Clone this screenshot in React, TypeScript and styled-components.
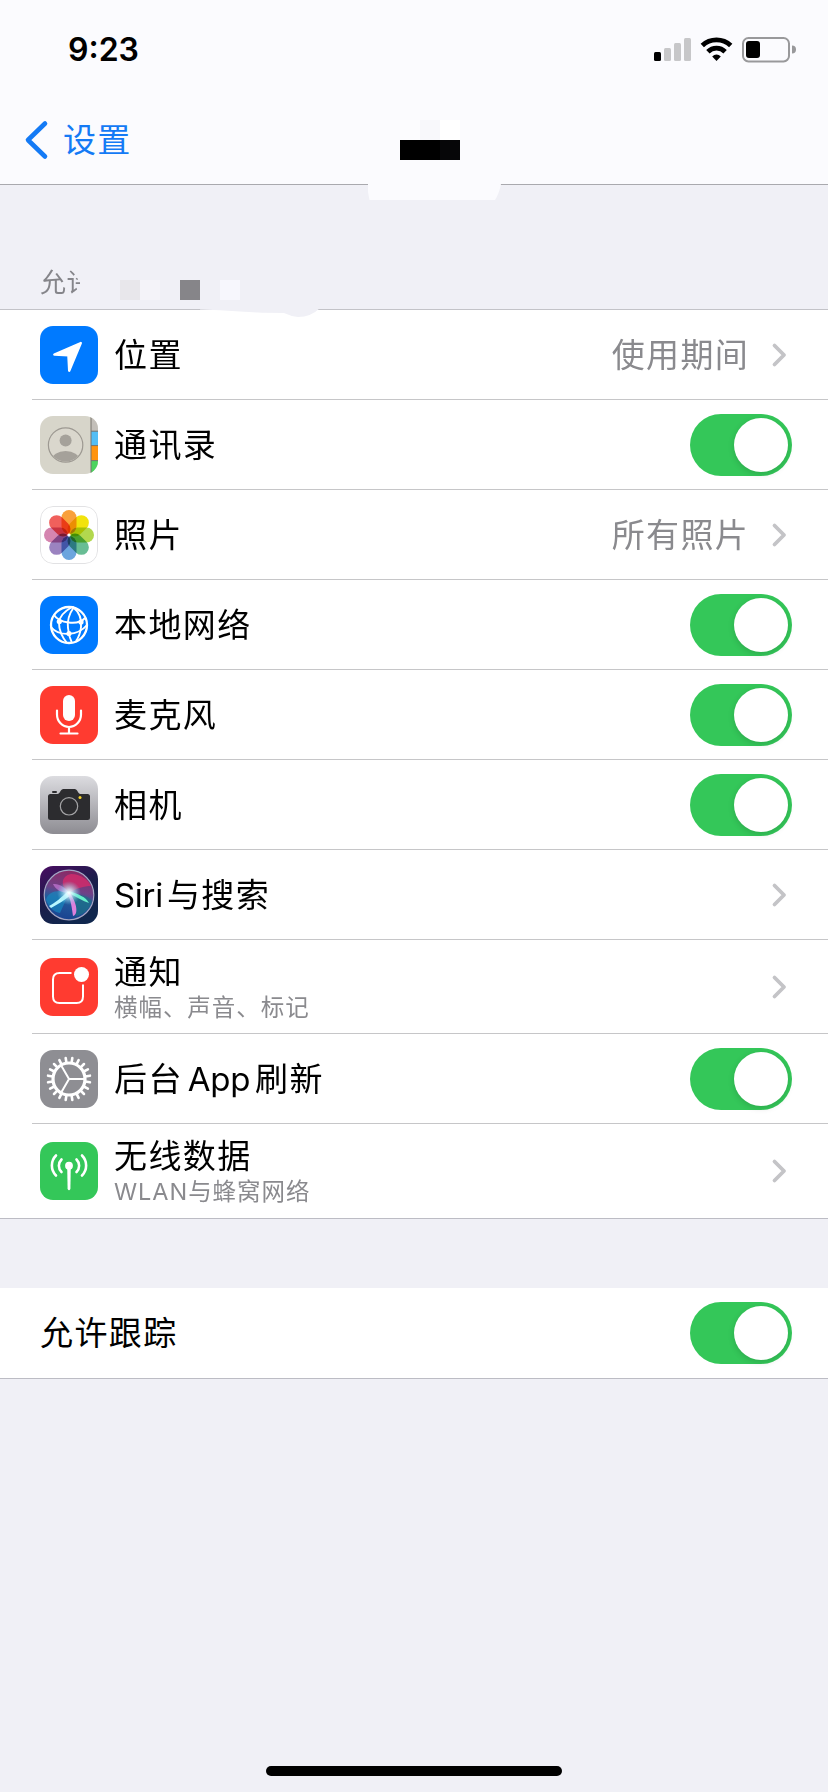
import React from "react"

import styled, { createGlobalStyle } from 'styled-components'

const GlobalStyle = createGlobalStyle`
    body {
        margin: 0;
        background: #f0f0f6;
        font-family: Inter, "Noto Sans CJK SC", sans-serif;
    }
`;

const Screen = styled.div`
    display: flex;
    flex-direction: column;
    width: 828px;
    height: 1792px;
    background: #f0f0f6;
    overflow: hidden;
`;

const Header = styled.header`
    position: relative;
    box-sizing: border-box;
    height: 185px;
    background: #fbfbfe;
    border-bottom: 1px solid #a9a9ae;
`;

const StatusBar = styled.div`
    display: flex;
    justify-content: space-between;
    align-items: center;
    height: 99px;
    padding: 0 32px 0 68px;
`;

const Time = styled.div`
    font-size: 32px;
    font-weight: 600;
    line-height: 40px;
    color: #000;
`;

const NavBar = styled.nav`
    display: flex;
    align-items: center;
    height: 82px;
    padding-left: 24px;
`;

const BackLabel = styled.span`
    margin-left: 14px;
    font-size: 33px;
    line-height: 40px;
    letter-spacing: 1.3px;
    color: #147aF5;
`;

const TitleMask = styled.svg`
    position: absolute;
    left: 368px;
    top: 118px;
`;

const SectionTitle = styled.div`
    position: relative;
    height: 124px;
`;

const SectionText = styled.span`
    display: block;
    padding: 79px 0 0 40px;
    font-size: 26px;
    line-height: 38px;
    letter-spacing: 0.6px;
    color: #85858a;
    clip-path: polygon(0 0, 75px 0, 75px 92px, 80px 95px, 80px 107px, 85px 112px, 85px 117px, 0 117px);
`;

const SectionMask = styled.svg`
    position: absolute;
    left: 80px;
    top: 95px;
`;

const Group = styled.section<{ $topLine?: boolean; $gap?: number }>`
    background: #fff;
    margin-top: ${p => p.$gap || 0}px;
    border-top: ${p => p.$topLine ? '1px solid #c3c3c8' : 'none'};
    border-bottom: 1px solid #bcbcc4;
`;

const Row = styled.div<{ $height: number; $last?: boolean }>`
    display: flex;
    align-items: center;
    box-sizing: border-box;
    height: ${p => p.$height}px;
    margin-left: 32px;
    padding: 0 36px 0 8px;
    border-bottom: 1px solid ${p => p.$last ? 'transparent' : '#c6c6c8'};
`;

const IconBox = styled.div`
    width: 58px;
    height: 58px;
    margin: 1px 16px 0 0;
    border-radius: 13px;
    overflow: hidden;
    svg {
        display: block;
    }
`;

const Texts = styled.div`
    flex: 1;
`;

const Label = styled.div`
    font-size: 33px;
    line-height: 40px;
    letter-spacing: 1.4px;
    color: #000;
`;

const Latin = styled.span<{ $left?: number; $right?: number }>`
    letter-spacing: -0.3px;
    margin-left: ${p => p.$left || 0}px;
    margin-right: ${p => p.$right || 0}px;
`;

const Detail = styled.div`
    margin-bottom: -1px;
    padding-top: 1px;
    font-size: 23.5px;
    line-height: 30px;
    letter-spacing: 0.95px;
    color: #8a8a8e;
`;

const Value = styled.div`
    margin-right: 22px;
    font-size: 33px;
    line-height: 40px;
    letter-spacing: 1.3px;
    color: #8a8a8e;
`;

const ChevronBox = styled.div`
    display: flex;
    width: 16px;
    margin-right: 5px;
`;

const Switch = styled.div`
    display: flex;
    justify-content: flex-end;
    box-sizing: border-box;
    width: 102px;
    height: 62px;
    margin-top: 1px;
    padding: 4px;
    border-radius: 31px;
    background: #34c759;
`;

const Knob = styled.div`
    width: 54px;
    height: 54px;
    border-radius: 50%;
    background: #fff;
    box-shadow: 0 2px 6px rgba(0, 0, 0, 0.15);
`;

const HomeBar = styled.div`
    width: 296px;
    height: 10px;
    margin: auto auto 16px 266px;
    border-radius: 5px;
    background: #000;
`;

const StatusIcons = () => (
    <svg width="143" height="28" viewBox="652 36 143 28">
        <rect x="653" y="52" width="7" height="9" rx="1.5" />
        <g fill="#c7c7c9">
            <rect x="663" y="48" width="7" height="13" rx="1.5" />
            <rect x="673" y="43" width="7" height="18" rx="1.5" />
            <rect x="683" y="38" width="7" height="23" rx="1.5" />
        </g>
        <g fill="none" stroke="#000" strokeWidth="4.8">
            <path d="M701.3 45.6a20.5 20.5 0 0 1 28.4 0" />
            <path d="M706.9 51.7a12.2 12.2 0 0 1 17.2 0" />
        </g>
        <path d="M715.5 61l-4.3-4.6a6 6 0 0 1 8.6 0z" />
        <rect x="742" y="38" width="46" height="23.4" rx="5.5" fill="none" stroke="#99999b" strokeWidth="2" />
        <rect x="745" y="41" width="14" height="17" rx="3" />
        <path d="M791 45.5a4 4 0 0 1 0 8z" fill="#99999b" />
    </svg>
)

const Chevron = () => (
    <ChevronBox>
        <svg width="16" height="26" viewBox="0 0 16 26">
            <path d="M3.5 3.5L13 13L3.5 22.5" fill="none" stroke="#c4c4c7" strokeWidth="3.8" strokeLinecap="round" strokeLinejoin="round" />
        </svg>
    </ChevronBox>
)

const Toggle = () => <Switch><Knob /></Switch>

const Tile = ({ fill, children }: { fill: string, children: React.ReactNode }) => (
    <IconBox>
        <svg width="58" height="58" viewBox="0 0 58 58">
            <rect width="58" height="58" fill={fill} />
            {children}
        </svg>
    </IconBox>
)

const LocationIcon = () => (
    <Tile fill="#007aff">
        <path d="M40.8 17L14.3 28.6L28.4 29.2L29.2 44.8Z" fill="#fff" stroke="#fff" strokeWidth="2.4" strokeLinejoin="round" />
    </Tile>
)

const ContactsIcon = () => (
    <Tile fill="#d7d5ca">
        <clipPath id="avatar"><circle cx="25.6" cy="29" r="16.5" /></clipPath>
        <circle cx="25.6" cy="29" r="17.2" fill="#dad7cd" stroke="#9d9992" strokeWidth="1.2" />
        <g clipPath="url(#avatar)" fill="#a5a19a">
            <circle cx="25.6" cy="24.4" r="6" />
            <ellipse cx="25.6" cy="44" rx="14" ry="9" />
        </g>
        <rect x="51" width="7" height="15" fill="#c3bfb9" />
        <rect x="51" y="15" width="7" height="15" fill="#54bef5" />
        <rect x="51" y="29.5" width="7" height="15" fill="#ff9410" />
        <rect x="51" y="44.5" width="7" height="14" fill="#4bd45f" />
        <path d="M51 0V58M51 15.2H58M51 29.6H58M51 44.6H58" stroke="#77736c" strokeWidth="1" />
    </Tile>
)

const petals = ['#f9a03c', '#f2e30c', '#b2d84e', '#68bd94', '#6ca5de', '#9b83c0', '#d585b0', '#f0605c'];

const Petals = styled.g`
    isolation: isolate;
    rect {
        mix-blend-mode: multiply;
    }
`;

const PhotosIcon = () => (
    <Tile fill="#fff">
        <Petals>
            {petals.map((color, i) => (
                <rect
                    key={color}
                    x="21.5" y="4" width="15" height="24" rx="7.5"
                    fill={color}
                    transform={`rotate(${i * 45} 29 29)`}
                />
            ))}
        </Petals>
        <circle cx="29" cy="29" r="1.6" fill="#fff" />
        <rect x="0.5" y="0.5" width="57" height="57" rx="12.5" fill="none" stroke="#e2e2e4" />
    </Tile>
)

const NetworkIcon = () => (
    <Tile fill="#007aff">
        <g fill="none" stroke="#fff" strokeWidth="1.9">
            <circle cx="29" cy="29" r="18" strokeWidth="2.3" />
            <path d="M32 11C25 15 19 21 19 27C19 34 22 41 27 47" />
            <path d="M34 11C29 18 27 25 28 32C28.5 38 30 43 32 47" />
            <path d="M33 11C39 16 42 23 41 31C40.5 36 39 41 36 45" />
            <path d="M14 19C19 27 38 30 45 22" />
            <path d="M11 31C19 41 38 40 47 29" />
        </g>
        <g fill="#fff">
            <circle cx="19.3" cy="25.5" r="2.6" />
            <circle cx="41" cy="26" r="2.6" />
            <circle cx="29" cy="37.5" r="2.6" />
        </g>
    </Tile>
)

const MicIcon = () => (
    <Tile fill="#ff3b30">
        <rect x="23" y="9" width="12" height="26" rx="6" fill="#fff" />
        <path d="M17 24.5V28.5a12 12.5 0 0 0 24 0V24.5M29 41V47.5M20.5 47.5H37.5" fill="none" stroke="#fff" strokeWidth="2.2" strokeLinecap="round" />
    </Tile>
)

const CameraIcon = () => (
    <Tile fill="url(#steel)">
        <linearGradient id="steel" x1="0" y1="0" x2="0" y2="1">
            <stop offset="0" stopColor="#dcdce0" />
            <stop offset="1" stopColor="#8d8c92" />
        </linearGradient>
        <path d="M10.5 18H17.5C20 18 20.5 13 23.5 13H34.5C37.5 13 38 18 40.5 18H47.5Q50 18 50 20.5V41.5Q50 44 47.5 44H10.5Q8 44 8 41.5V20.5Q8 18 10.5 18Z" fill="#2c2c2f" />
        <rect x="12" y="15" width="5" height="2" rx="1" fill="#2c2c2f" />
        <circle cx="29" cy="30.3" r="8.7" fill="none" stroke="#a3a3a5" strokeWidth="1.2" />
        <circle cx="40" cy="21.5" r="1.5" fill="#f5d32a" />
    </Tile>
)

const SiriIcon = () => (
    <Tile fill="url(#night)">
        <linearGradient id="night" x1="0" y1="0" x2="0.5" y2="1">
            <stop offset="0" stopColor="#4a0d62" />
            <stop offset="0.55" stopColor="#1b1d4a" />
            <stop offset="1" stopColor="#10274e" />
        </linearGradient>
        <linearGradient id="orb" x1="0.6" y1="0" x2="0.4" y2="1">
            <stop offset="0" stopColor="#8c2863" />
            <stop offset="0.4" stopColor="#6f4187" />
            <stop offset="0.6" stopColor="#245c9c" />
            <stop offset="1" stopColor="#1a4290" />
        </linearGradient>
        <radialGradient id="glow">
            <stop offset="0" stopColor="#fff" />
            <stop offset="0.3" stopColor="#d6f7ff" stopOpacity="0.8" />
            <stop offset="1" stopColor="#6fd6ee" stopOpacity="0" />
        </radialGradient>
        <circle cx="29" cy="29" r="24.5" fill="url(#orb)" />
        <path d="M29 27C19 23 8 25 6 34C9 42 14 46 20 47Z" fill="#168fc4" opacity="0.6" />
        <path d="M29 27C37 28 48 29 52 35C49 44 43 49 36 50Z" fill="#1c6f86" opacity="0.7" />
        <path d="M29 27C20 20 21 10 31 8C42 8 49 15 51 20C44 20 37 22 29 27Z" fill="#d42c6c" opacity="0.8" />
        <path d="M29 27C24 19 17 18 13 18C15 23 21 27 29 27Z" fill="#c479d5" opacity="0.7" />
        <path d="M28 25C22 31 15 37 9 40L11 42C18 38 25 34 31 29Z" fill="#b8f8ff" />
        <path d="M29 27C36 31 43 35 49 37C46 31 38 28 29 25Z" fill="#65efca" />
        <path d="M27 27C31 33 32 43 33 50C38 49 38 39 30 27Z" fill="#dc80dc" />
        <circle cx="29" cy="27" r="12" fill="url(#glow)" />
        <circle cx="29" cy="29" r="24.8" fill="none" stroke="#a5a6c4" strokeWidth="1.2" />
    </Tile>
)

const NotificationIcon = () => (
    <Tile fill="#ff3b30">
        <path d="M31.5 15H19.5Q13 15 13 21.5V38.5Q13 45 19.5 45H36.5Q43 45 43 38.5V26.5" fill="none" stroke="#fff" strokeWidth="2" />
        <circle cx="41.5" cy="16.5" r="7.5" fill="#fff" />
    </Tile>
)

const GearIcon = () => (
    <Tile fill="#8e8e93">
        <g stroke="#fff" fill="none">
            {Array.from({ length: 20 }, (_, i) => (
                <path key={i} d="M29 12.5V7.8" strokeWidth="2.6" strokeLinecap="round" transform={`rotate(${i * 18 + 9} 29 29)`} />
            ))}
            <circle cx="29" cy="29" r="16" strokeWidth="3.2" />
            <path d="M29 29H44M29 29L21.5 16M29 29L21.5 42" strokeWidth="2" />
        </g>
    </Tile>
)

const DataIcon = () => (
    <Tile fill="#34c759">
        <g fill="none" stroke="#fff" strokeWidth="2.6" strokeLinecap="round">
            <path d="M16 13.5C10.5 19 10.5 28 16 33.5" />
            <path d="M21.5 17.5C18 21 18 26.500 21.5 30" />
            <path d="M36.5 17.5C40 21 40 26.5 36.5 30" />
            <path d="M42 13.5C47.5 19 47.5 28 42 33.5" />
        </g>
        <circle cx="29" cy="23.7" r="3.9" fill="#fff" />
        <path d="M27.2 24H30.8L30.4 47Q29 49.5 27.6 47Z" fill="#fff" />
    </Tile>
)

const App = () => {
    return (
        <Screen>
            <GlobalStyle />
            <Header>
                <StatusBar>
                    <Time>9:23</Time>
                    <StatusIcons />
                </StatusBar>
                <NavBar>
                    <svg width="25" height="40" viewBox="0 0 25 40">
                        <path d="M21 3.5L4 20L21 36.5" fill="none" stroke="#147af5" strokeWidth="4.6" strokeLinecap="round" strokeLinejoin="round" />
                    </svg>
                    <BackLabel>设置</BackLabel>
                </NavBar>
                <TitleMask width="134" height="82" viewBox="368 118 134 82">
                    <path d="M368 180H501V184Q499 194 495 200H369.5L368 192Z" fill="#fbfbfe" />
                    <rect x="400" y="120" width="20" height="20" fill="#fcfcfe" />
                    <rect x="420" y="120" width="20" height="20" fill="#f8f8fb" />
                    <rect x="440" y="120" width="20" height="20" fill="#fff" />
                    <rect x="400" y="140" width="40" height="20" fill="#000" />
                    <rect x="440" y="140" width="20" height="20" fill="#060608" />
                </TitleMask>
            </Header>

            <SectionTitle>
                <SectionText>允许</SectionText>
                <SectionMask width="250" height="38" viewBox="80 280 250 38">
                    <rect x="80" y="280" width="20" height="20" fill="#f2f1f7" />
                    <rect x="120" y="280" width="20" height="20" fill="#e8e7eb" />
                    <rect x="140" y="280" width="20" height="20" fill="#f4f3f9" />
                    <rect x="180" y="280" width="20" height="20" fill="#868589" />
                    <rect x="220" y="280" width="20" height="20" fill="#f7f7fd" />
                    <path d="M200 308H320Q311 317 298 317Q290 316 284 313Q262 313 240 311.5Q220 310 200 309.5Z" fill="#f0f0f6" />
                </SectionMask>
            </SectionTitle>

            <Group $topLine>
                <Row $height={90}>
                    <LocationIcon />
                    <Texts><Label>位置</Label></Texts>
                    <Value>使用期间</Value>
                    <Chevron />
                </Row>
                <Row $height={90}>
                    <ContactsIcon />
                    <Texts><Label>通讯录</Label></Texts>
                    <Toggle />
                </Row>
                <Row $height={90}>
                    <PhotosIcon />
                    <Texts><Label>照片</Label></Texts>
                    <Value>所有照片</Value>
                    <Chevron />
                </Row>
                <Row $height={90}>
                    <NetworkIcon />
                    <Texts><Label>本地网络</Label></Texts>
                    <Toggle />
                </Row>
                <Row $height={90}>
                    <MicIcon />
                    <Texts><Label>麦克风</Label></Texts>
                    <Toggle />
                </Row>
                <Row $height={90}>
                    <CameraIcon />
                    <Texts><Label>相机</Label></Texts>
                    <Toggle />
                </Row>
                <Row $height={90}>
                    <SiriIcon />
                    <Texts><Label><Latin $right={4}>Siri</Latin>与搜索</Label></Texts>
                    <Chevron />
                </Row>
                <Row $height={94}>
                    <NotificationIcon />
                    <Texts>
                        <Label>通知</Label>
                        <Detail>横幅、声音、标记</Detail>
                    </Texts>
                    <Chevron />
                </Row>
                <Row $height={90}>
                    <GearIcon />
                    <Texts><Label>后台<Latin $left={5} $right={5}>App</Latin>刷新</Label></Texts>
                    <Toggle />
                </Row>
                <Row $height={94} $last>
                    <DataIcon />
                    <Texts>
                        <Label>无线数据</Label>
                        <Detail>WLAN与蜂窝网络</Detail>
                    </Texts>
                    <Chevron />
                </Row>
            </Group>

            <Group $gap={69}>
                <Row $height={90} $last>
                    <Texts><Label>允许跟踪</Label></Texts>
                    <Toggle />
                </Row>
            </Group>

            <HomeBar />
        </Screen>
    )
}

export default App;
